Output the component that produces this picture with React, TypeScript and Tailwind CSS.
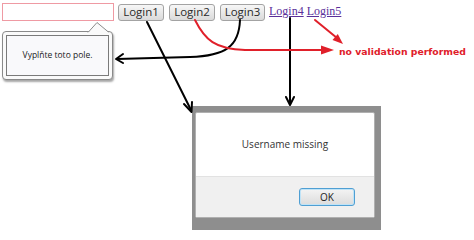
import React from "react";

const btn =
  "h-[17px] rounded-[3px] border border-[#a3a3a3] bg-gradient-to-b from-[#f7f7f7] to-[#dadada] text-[11.5px] leading-none text-[#2a2a2a] font-['Open_Sans',sans-serif] flex items-center justify-center";

const Arrows = () => (
  <svg className="absolute inset-0 pointer-events-none" width="474" height="240" viewBox="0 0 474 240">
    {/* Login1 -> dialog */}
    <g stroke="#000" strokeWidth="2" fill="none" strokeLinecap="round" strokeLinejoin="round">
      <path d="M147 22 L191 110" />
      <path d="M184 104 L191.5 112 L192 102" />
      {/* Login3 -> bubble */}
      <path d="M240 20 C 239 46, 226 56, 190 57 L 117 59" />
      <path d="M123 54 L116 59 L123 63" />
      {/* Login4 -> dialog */}
      <path d="M290 18 L290 104" />
      <path d="M286 97 L290 105 L294 97" />
    </g>
    <g stroke="#e0202a" strokeWidth="2" fill="none" strokeLinecap="round">
      <path d="M195 20 C 205 40, 215 49, 245 50 L 324 50" />
      <path d="M315 20 L337 38" />
    </g>
    <g fill="#e0202a">
      <polygon points="334,50 321,45.5 321,54.5" />
      <polygon points="343,44 332.5,40 337.8,34" />
    </g>
  </svg>
);

export default function App() {
  return (
    <div className="relative w-[474px] h-[240px] bg-white overflow-hidden">
      <div className="flex items-center pt-[3px] pl-[2px]">
        <div className="w-[112px] h-[18px] border border-[#ef9aa3] bg-white" />
        <button className={`${btn} ml-[4px] w-[46px]`}>Login1</button>
        <button className={`${btn} ml-[5px] w-[46px]`}>Login2</button>
        <button className={`${btn} ml-[5px] w-[45px]`}>Login3</button>
        <div className="ml-[4px] -mt-[3px] flex gap-[3px] font-['Liberation_Serif',serif] text-[12px] text-[#5a2f9a]">
          <a className="underline">Login4</a>
          <a className="underline">Login5</a>
        </div>
      </div>

      {/* validation bubble */}
      <div className="absolute left-[2px] top-[31px] w-[111px] h-[49px] rounded-[4px] border border-[#8a8a8a] bg-[#fafafa] shadow-[1px_2px_2px_rgba(0,0,0,0.35)] p-[3px]">
        <div className="h-full border border-[#7a7a7a] bg-[#f9f9fb] flex items-center justify-center font-['Open_Sans',sans-serif] text-[8.5px] text-[#222]">
          Vyplňte toto pole.
        </div>
      </div>
      <svg className="absolute left-[86px] top-[21px]" width="28" height="12" viewBox="0 0 28 12">
        <path d="M2 11.5 L11 1.5 L23 11.5" fill="#fafafa" stroke="#8a8a8a" strokeWidth="1" />
        <rect x="2.5" y="11" width="20" height="2" fill="#fafafa" />
      </svg>

      {/* alert dialog */}
      <div className="absolute left-[192px] top-[106px] w-[189px] h-[124px] bg-[#8e8e8e] pt-[6px] pl-[3px] pr-[6px] pb-[12px]">
        <div className="h-full flex flex-col bg-white border border-[#b0b0b0] rounded-[2px]">
          <div className="h-[63px] flex items-center justify-center font-['Open_Sans',sans-serif] text-[10px] text-[#333]">
            Username missing
          </div>
          <div className="flex-1 bg-[#f0f0f0] border-t border-[#e2e2e2] flex items-start justify-end pt-[11px] pr-[19px]">
            <div className="w-[56px] h-[18px] rounded-[3px] border border-[#4f9fd3] bg-gradient-to-b from-[#f4f4f4] to-[#dcdcdc] shadow-[inset_0_0_0_1px_#bfe3f7] flex items-center justify-center font-['Open_Sans',sans-serif] text-[10px] text-[#222]">
              OK
            </div>
          </div>
        </div>
      </div>

      <Arrows />

      <div className="absolute left-[339px] top-[45px] font-['DejaVu_Sans',sans-serif] font-bold text-[9.3px] text-[#e0202a] whitespace-nowrap">
        no validation performed
      </div>
    </div>
  );
}
